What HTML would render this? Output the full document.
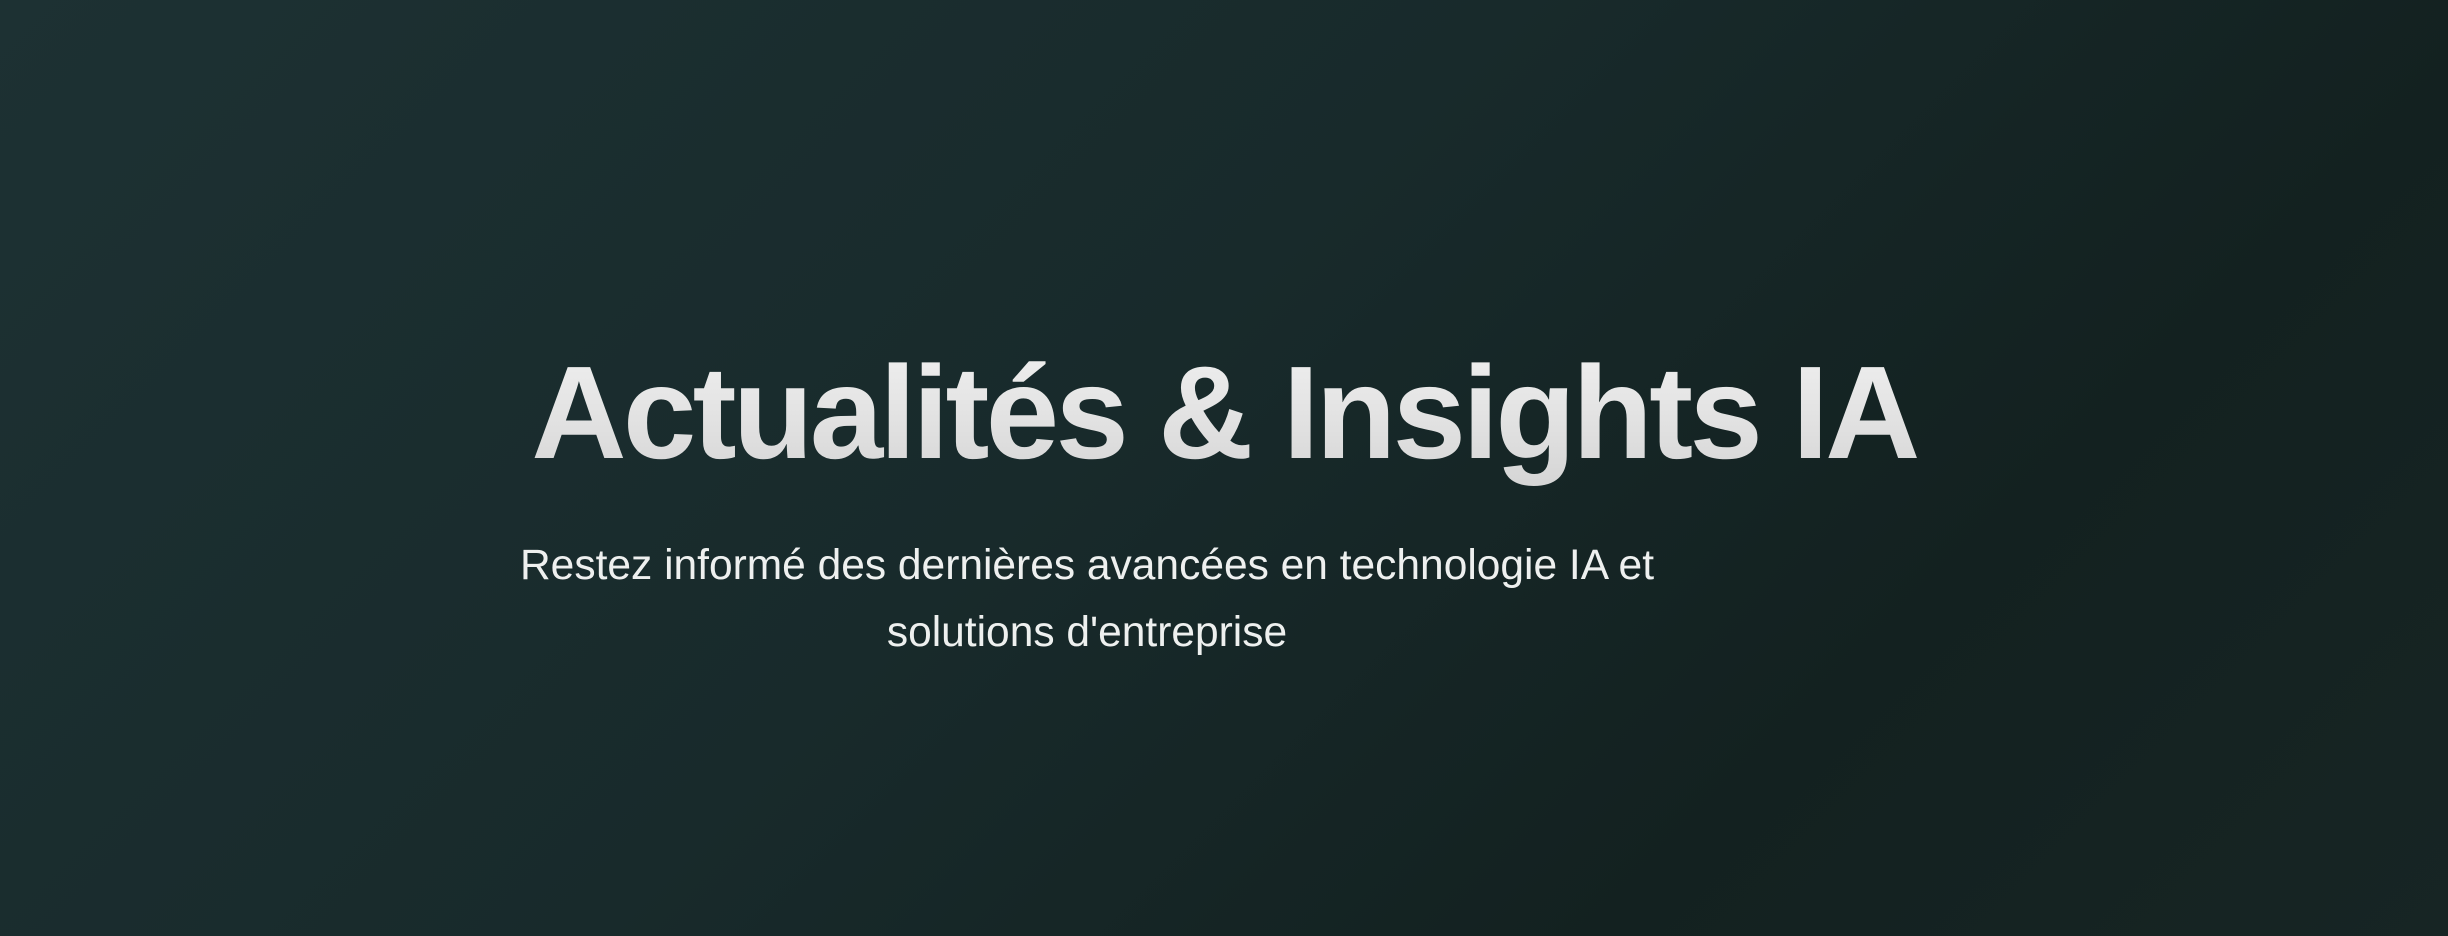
<!DOCTYPE html>
<html><head><meta charset="utf-8"><style>
html,body{margin:0;padding:0}
body{width:2448px;height:936px;overflow:hidden;position:relative;
background:linear-gradient(135deg,#1d3133 0%,#182a2b 45%,#132120 75%,#172524 100%);
font-family:"Liberation Sans",sans-serif;}
h1{position:absolute;left:0;width:2448px;top:333px;margin:0;text-align:center;
font-size:132px;font-weight:bold;letter-spacing:-3.7px;line-height:160px;
color:#e6e6e6;background:linear-gradient(180deg,#f2f2f2,#d4d4d4);-webkit-background-clip:text;background-clip:text;-webkit-text-fill-color:transparent;}
p{position:absolute;left:407px;width:1360px;top:532px;margin:0;text-align:center;
font-size:42.5px;line-height:67px;color:#eef0ef;}
</style></head><body>
<h1>Actualités &amp; Insights IA</h1>
<p>Restez informé des dernières avancées en technologie IA et<br>solutions d'entreprise</p>
</body></html>
